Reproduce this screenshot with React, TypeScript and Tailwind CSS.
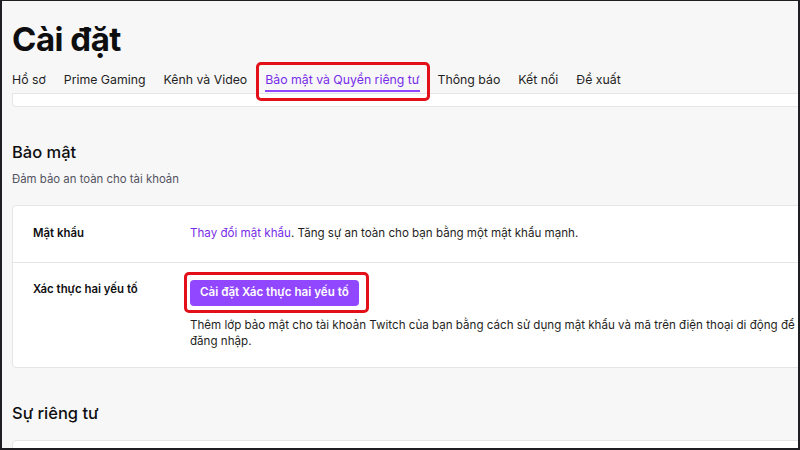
import React from 'react';

const tabs = ['Hồ sơ', 'Prime Gaming', 'Kênh và Video', 'Bảo mật và Quyền riêng tư', 'Thông báo', 'Kết nối', 'Đề xuất'];
const activeTab = 'Bảo mật và Quyền riêng tư';

export default function App() {
    return (
        <div
            className="w-[800px] h-[450px] overflow-hidden bg-[#f7f7f8] border-l-2 border-t border-r-2 border-b-2 border-[#1f1f23] text-[#0e0e10]"
            style={{ fontFamily: 'Inter, "Noto Sans", sans-serif' }}
        >
            <div className="pl-[10px]">
                {/* Title */}
                <h1 className="pt-[18px] text-[33px] leading-[40px] font-bold tracking-[-0.5px]">Cài đặt</h1>

                {/* Tabs */}
                <div className="mt-[7px] flex items-end gap-[18px] border-b border-[#e5e5e8] h-[28px]">
                    {tabs.map((t) =>
                        t === activeTab ? (
                            <div key={t} className="relative h-full flex flex-col justify-between">
                                <span className="pt-[6px] text-[12.3px] leading-[16px] text-[#772ce8]">{t}</span>
                                <span className="h-[2px] bg-[#9147ff] mb-[1px]" />
                                <span className="absolute -left-[9px] -right-[10px] -top-[4px] -bottom-[8px] border-[3px] border-[#e3101a] rounded-[5px]" />
                            </div>
                        ) : (
                            <div key={t} className="h-full pt-[6px] text-[12.3px] leading-[16px] text-[#1f1f23]">
                                {t}
                            </div>
                        )
                    )}
                </div>

                {/* Previous panel, tail end */}
                <div className="mr-[-20px] h-[13px] bg-white border border-t-0 border-[#e5e5e8] rounded-b-[4px]" />

                {/* Security */}
                <h2 className="mt-[34px] text-[16.5px] leading-[22px] font-medium">Bảo mật</h2>
                <p className="mt-[8px] text-[11.4px] leading-[16px] text-[#53535f]">Đảm bảo an toàn cho tài khoản</p>

                <div className="mt-[18px] mr-[-20px] bg-white border border-[#e5e5e8] rounded-[4px]">
                    <div className="flex h-[57px] items-center border-b border-[#e5e5e8]">
                        <div className="w-[177px] pl-[20px] text-[11.4px] font-semibold">Mật khẩu</div>
                        <p className="text-[11.6px] text-[#1f1f23]">
                            <span className="text-[#772ce8]">Thay đổi mật khẩu</span>. Tăng sự an toàn cho bạn bằng một mật khẩu mạnh.
                        </p>
                    </div>
                    <div className="flex pt-[15px] pb-[18px]">
                        <div className="w-[177px] pl-[20px] pt-[3px] text-[11.4px] leading-[16px] font-semibold">Xác thực hai yếu tố</div>
                        <div className="flex flex-col items-start">
                            <div className="relative">
                                <button className="h-[26px] px-[10px] rounded-[4px] bg-[#9147ff] text-white text-[11.6px] font-semibold">
                                    Cài đặt Xác thực hai yếu tố
                                </button>
                                <span className="absolute -left-[6px] -right-[10px] -top-[6px] -bottom-[7px] border-[3px] border-[#e3101a] rounded-[5px]" />
                            </div>
                            <p className="mt-[11px] w-[610px] text-[11.6px] leading-[16px] text-[#1f1f23]">
                                Thêm lớp bảo mật cho tài khoản Twitch của bạn bằng cách sử dụng mật khẩu và mã trên điện thoại di động để đăng nhập.
                            </p>
                        </div>
                    </div>
                </div>

                {/* Privacy */}
                <h2 className="mt-[34px] text-[16.5px] leading-[22px] font-medium">Sự riêng tư</h2>
                <div className="mt-[16px] mr-[-20px] h-[40px] bg-white border border-[#e5e5e8] rounded-[4px]" />
            </div>
        </div>
    );
}
